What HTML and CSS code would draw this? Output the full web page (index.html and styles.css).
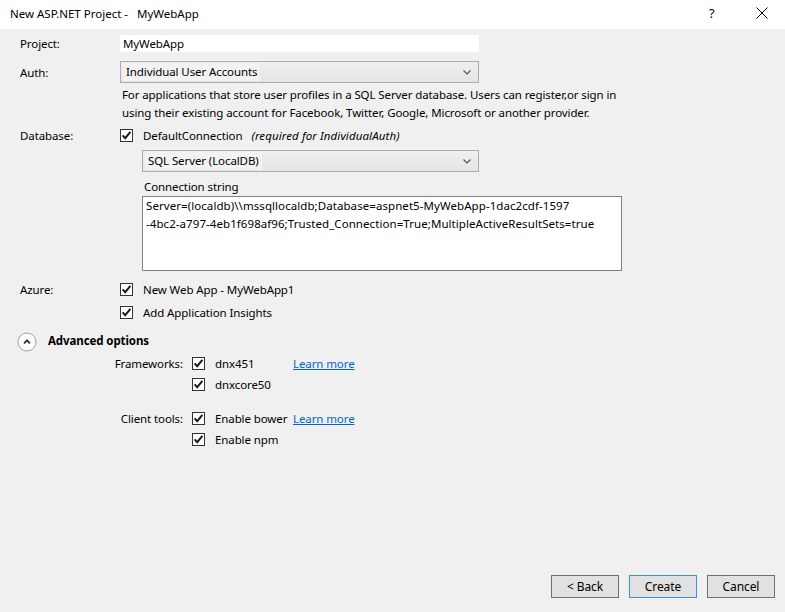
FILE: index.html
```html
<!DOCTYPE html>
<html>
<head>
<meta charset="utf-8">
<link rel="stylesheet" href="styles.css">
</head>
<body>
<div class="dialog">
  <div class="titlebar">
    <span class="title">New ASP.NET Project -   MyWebApp</span>
    <span class="tb-help">?</span>
    <span class="tb-close">
      <svg width="12" height="12" viewBox="0 0 12 12"><path d="M0.5 0.5 L11.5 11.5 M11.5 0.5 L0.5 11.5" stroke="#000" stroke-width="1" fill="none"/></svg>
    </span>
  </div>
  <div class="content">
    <div class="row r-project">
      <div class="label">Project:</div>
      <div class="input">MyWebApp</div>
    </div>
    <div class="row r-auth">
      <div class="label">Auth:</div>
      <div class="select w-auth"><span class="sel-text">Individual User Accounts</span><span class="arrow"><svg width="8" height="5" viewBox="0 0 8 5"><path d="M0.5 0.5 L4 4 L7.5 0.5" stroke="#555" stroke-width="1.2" fill="none"/></svg></span></div>
    </div>
    <div class="row r-desc">
      <div class="label"></div>
      <div class="desc">For applications that store user profiles in a SQL Server database. Users can register,or sign in<br>using their existing account for Facebook, Twitter, Google, Microsoft or another provider.</div>
    </div>
    <div class="row r-db">
      <div class="label">Database:</div>
      <span class="cb"><svg width="11" height="11" viewBox="0 0 11 11"><path d="M1.6 5.4 L4.2 8.2 L9.4 1.9" stroke="#1a1a1a" stroke-width="2" fill="none"/></svg></span>
      <span class="cb-text">DefaultConnection</span>
      <span class="note">(required for IndividualAuth)</span>
    </div>
    <div class="row r-dbsel">
      <div class="label"></div>
      <div class="indent">
        <div class="select w-db"><span class="sel-text">SQL Server (LocalDB)</span><span class="arrow"><svg width="8" height="5" viewBox="0 0 8 5"><path d="M0.5 0.5 L4 4 L7.5 0.5" stroke="#555" stroke-width="1.2" fill="none"/></svg></span></div>
      </div>
    </div>
    <div class="row r-connlabel">
      <div class="label"></div>
      <div class="indent conn-label">Connection string</div>
    </div>
    <div class="row r-conn">
      <div class="label"></div>
      <div class="indent">
        <div class="textarea">Server=(localdb)\\mssqllocaldb;Database=aspnet5-MyWebApp-1dac2cdf-1597<br>-4bc2-a797-4eb1f698af96;Trusted_Connection=True;MultipleActiveResultSets=true</div>
      </div>
    </div>
    <div class="row r-azure">
      <div class="label">Azure:</div>
      <span class="cb"><svg width="11" height="11" viewBox="0 0 11 11"><path d="M1.6 5.4 L4.2 8.2 L9.4 1.9" stroke="#1a1a1a" stroke-width="2" fill="none"/></svg></span>
      <span class="cb-text">New Web App - MyWebApp1</span>
    </div>
    <div class="row r-insights">
      <div class="label"></div>
      <span class="cb"><svg width="11" height="11" viewBox="0 0 11 11"><path d="M1.6 5.4 L4.2 8.2 L9.4 1.9" stroke="#1a1a1a" stroke-width="2" fill="none"/></svg></span>
      <span class="cb-text">Add Application Insights</span>
    </div>
    <div class="adv-head">
      <span class="expander"><svg width="20" height="20" viewBox="0 0 20 20"><circle cx="10" cy="10" r="9" fill="#fff" stroke="#a0a0a0" stroke-width="1"/><path d="M7 11.3 L10 8.3 L13 11.3" stroke="#333" stroke-width="1.8" fill="none"/></svg></span>
      <span class="adv-title">Advanced options</span>
    </div>
    <div class="adv">
      <div class="arow a-fw">
        <div class="alabel">Frameworks:</div>
        <span class="cb"><svg width="11" height="11" viewBox="0 0 11 11"><path d="M1.6 5.4 L4.2 8.2 L9.4 1.9" stroke="#1a1a1a" stroke-width="2" fill="none"/></svg></span>
        <span class="acb-text">dnx451</span>
        <a class="link" href="#">Learn more</a>
      </div>
      <div class="arow a-core">
        <div class="alabel"></div>
        <span class="cb"><svg width="11" height="11" viewBox="0 0 11 11"><path d="M1.6 5.4 L4.2 8.2 L9.4 1.9" stroke="#1a1a1a" stroke-width="2" fill="none"/></svg></span>
        <span class="acb-text">dnxcore50</span>
      </div>
      <div class="arow a-ct">
        <div class="alabel">Client tools:</div>
        <span class="cb"><svg width="11" height="11" viewBox="0 0 11 11"><path d="M1.6 5.4 L4.2 8.2 L9.4 1.9" stroke="#1a1a1a" stroke-width="2" fill="none"/></svg></span>
        <span class="acb-text">Enable bower</span>
        <a class="link" href="#">Learn more</a>
      </div>
      <div class="arow a-npm">
        <div class="alabel"></div>
        <span class="cb"><svg width="11" height="11" viewBox="0 0 11 11"><path d="M1.6 5.4 L4.2 8.2 L9.4 1.9" stroke="#1a1a1a" stroke-width="2" fill="none"/></svg></span>
        <span class="acb-text">Enable npm</span>
      </div>
    </div>
  </div>
  <div class="footer">
    <button class="btn">&lt; Back</button>
    <button class="btn btn-default">Create</button>
    <button class="btn">Cancel</button>
  </div>
</div>
</body>
</html>
```
FILE: styles.css
```css
html, body {
  margin: 0;
  padding: 0;
}
body {
  font-family: "Noto Sans", "Open Sans", sans-serif;
  font-size: 11.5px;
  letter-spacing: -0.1px;
  color: #000;
  background: #f0f0f0;
}
.dialog {
  width: 785px;
  height: 612px;
  display: flex;
  flex-direction: column;
  background: #f0f0f0;
}
.titlebar {
  height: 29px;
  background: #fff;
  display: flex;
  align-items: center;
  flex-shrink: 0;
}
.title {
  white-space: pre;
  padding-left: 10px;
  flex: 1;
  margin-top: -2px;
  letter-spacing: 0;
}
.tb-help {
  width: 12px;
  margin-right: 35px;
  font-size: 13px;
  margin-top: -3px;
}
.tb-close {
  width: 12px;
  height: 12px;
  margin-right: 17px;
  margin-top: -4px;
  display: flex;
}
.content {
  padding: 6px 0 0 20px;
}
.row {
  display: flex;
  align-items: center;
}
.label {
  width: 100px;
  flex-shrink: 0;
}
.input {
  width: 356px;
  height: 17px;
  line-height: 17px;
  background: #fff;
  padding-left: 3px;
}
.r-auth { margin-top: 9px; }
.select {
  height: 22px;
  box-sizing: border-box;
  border: 1px solid #adadad;
  background: linear-gradient(#efefef, #e5e5e5);
  display: flex;
  align-items: center;
  padding-left: 2px;
  position: relative;
}
.w-auth { width: 359px; }
.w-db { width: 337px; }
.sel-text {
  background: #f2f2f2;
  padding: 1px 3px 2px 3px;
  line-height: 15px;
}
.arrow {
  position: absolute;
  right: 7px;
  top: 8px;
  display: flex;
}
.r-desc {
  margin-top: 3px;
  align-items: flex-start;
}
.desc {
  line-height: 18px;
  padding-left: 2px;
  color: #000;
}
.r-db { margin-top: 4px; height: 18px; }
.cb {
  width: 13px;
  height: 13px;
  box-sizing: border-box;
  border: 1px solid #333;
  background: #fff;
  display: flex;
  align-items: center;
  justify-content: center;
  flex-shrink: 0;
}
.cb svg { display: block; }
.cb-text {
  margin-left: 10px;
}
.note {
  font-style: italic;
  margin-left: 9px;
  letter-spacing: 0.1px;
}
.indent {
  margin-left: 22px;
}
.r-dbsel { margin-top: 6px; }
.r-connlabel { margin-top: 5px; height: 18px; }
.conn-label { padding-left: 2px; }
.r-conn { margin-top: 1px; }
.textarea {
  width: 480px;
  height: 75px;
  box-sizing: border-box;
  border: 1px solid #828282;
  background: #fff;
  padding: 0 0 0 3px;
  line-height: 18px;
  white-space: nowrap;
  letter-spacing: 0.07px;
}
.r-azure { margin-top: 9px; height: 18px; }
.r-insights { margin-top: 5px; height: 18px; }
.adv-head {
  margin-top: 11px;
  margin-left: -3px;
  height: 20px;
  display: flex;
  align-items: center;
}
.expander { display: flex; width: 20px; height: 20px; }
.adv-title {
  font-weight: bold;
  margin-left: 11px;
  margin-top: -3px;
}
.adv {
  margin-top: 2px;
}
.arow {
  display: flex;
  align-items: center;
  height: 18px;
}
.alabel {
  width: 163px;
  text-align: right;
  margin-right: 9px;
  flex-shrink: 0;
}
.acb-text {
  margin-left: 10px;
  width: 78px;
  flex-shrink: 0;
}
.link {
  color: #0066cc;
  text-decoration: underline;
}
.a-core { margin-top: 3px; }
.a-ct { margin-top: 16px; }
.a-npm { margin-top: 3px; }
.footer {
  margin-top: auto;
  display: flex;
  justify-content: flex-end;
  gap: 10px;
  padding: 0 10px 14px 0;
}
.btn {
  width: 68px;
  height: 23px;
  box-sizing: border-box;
  border: 1px solid #707070;
  background: #e1e1e1;
  font-family: "Noto Sans", "Open Sans", sans-serif;
  font-size: 12px;
  letter-spacing: -0.1px;
  color: #000;
  padding: 0;
  margin: 0;
}
.btn-default {
  border-color: #3c8fe8;
}
```
